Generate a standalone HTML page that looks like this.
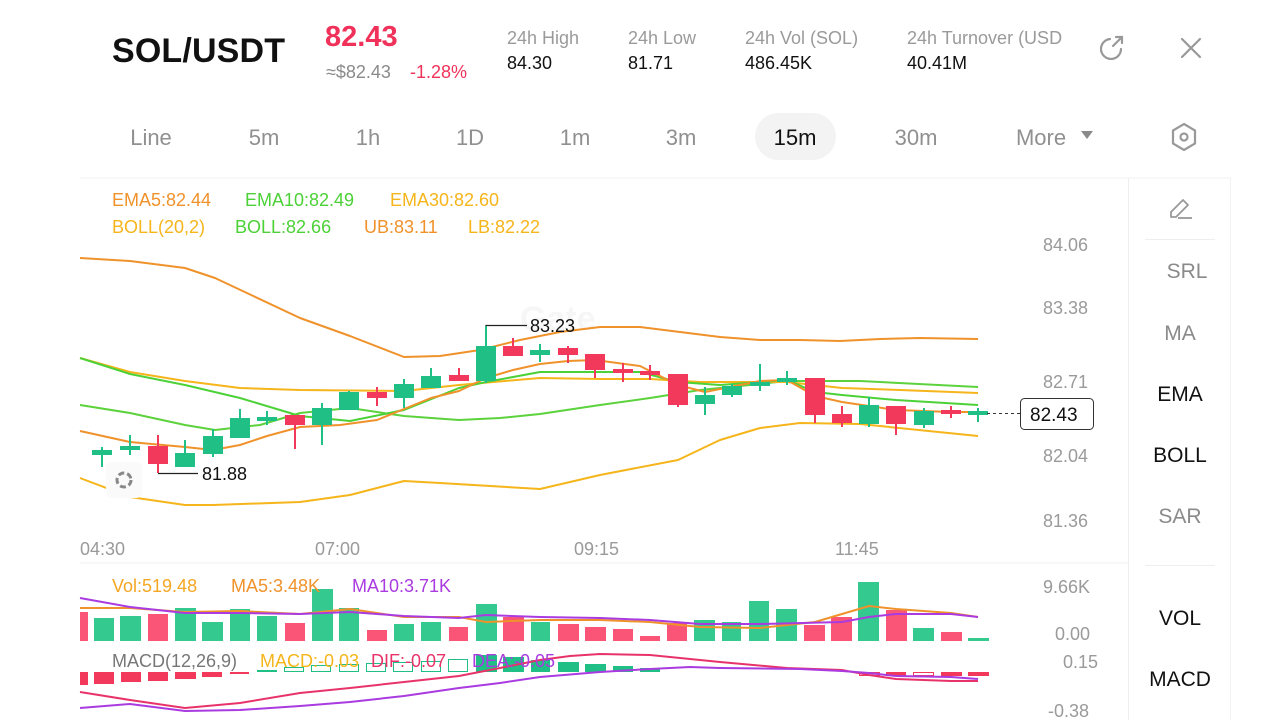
<!DOCTYPE html>
<html><head><meta charset="utf-8"><style>
html,body{margin:0;padding:0;background:#fff;width:1280px;height:720px;overflow:hidden;font-family:"Liberation Sans",Arial,sans-serif}
svg text{font-family:"Liberation Sans",Arial,sans-serif}
</style></head><body>
<svg width="1280" height="720" viewBox="0 0 1280 720" xmlns="http://www.w3.org/2000/svg">
<!-- header -->
<text x="112" y="62" font-size="34" font-weight="bold" fill="#111" textLength="173">SOL/USDT</text>
<text x="325" y="46" font-size="29" font-weight="bold" fill="#F0315A">82.43</text>
<text x="326" y="78" font-size="18" fill="#8a8a8a">≈$82.43</text>
<text x="410" y="78" font-size="18" fill="#F0315A">-1.28%</text>
<g font-size="18" fill="#9a9a9a" xml:space="preserve" style="white-space:pre">
<text x="507" y="44">24h  High</text><text x="628" y="44">24h  Low</text><text x="745" y="44">24h  Vol (SOL)</text><text x="907" y="44">24h  Turnover (USD</text>
</g>
<rect x="1084" y="20" width="20" height="40" fill="#fff"/>
<g font-size="18" fill="#111">
<text x="507" y="69">84.30</text><text x="628" y="69">81.71</text><text x="745" y="69">486.45K</text><text x="907" y="69">40.41M</text>
</g>
<!-- share icon -->
<g fill="none" stroke="#999" stroke-width="2.2" stroke-linecap="round">
<path d="M1121 49 A10 10 0 1 1 1110 39"/>
<path d="M1113 46 L1122 37 M1116 37 L1122 37 L1122 43"/>
<path d="M1182 39 L1200 57 M1200 39 L1182 57"/>
</g>
<!-- tabs -->
<rect x="755" y="113" width="81" height="47" rx="23.5" fill="#f3f3f3"/>
<g font-size="22" fill="#909090" text-anchor="middle">
<text x="151" y="145">Line</text><text x="264" y="145">5m</text><text x="368" y="145">1h</text><text x="470" y="145">1D</text><text x="575" y="145">1m</text><text x="681" y="145">3m</text><text x="795" y="145" fill="#111">15m</text><text x="916" y="145">30m</text><text x="1041" y="145">More</text>
</g>
<path d="M1081 131 L1093 131 L1087 139 Z" fill="#8a8a8a"/>
<g fill="none" stroke="#999" stroke-width="2.2"><path d="M1184 124 L1195 130.5 L1195 143.5 L1184 150 L1173 143.5 L1173 130.5 Z"/><circle cx="1184" cy="137" r="3.5"/></g>
<!-- frame lines -->
<line x1="80" y1="178" x2="1230" y2="178" stroke="#f0f0f0"/>
<line x1="1128.5" y1="178" x2="1128.5" y2="720" stroke="#eee"/>
<line x1="1230.5" y1="178" x2="1230.5" y2="720" stroke="#f2f2f2"/>
<line x1="80" y1="563" x2="1128" y2="563" stroke="#f0f0f0"/>
<line x1="1145" y1="239.5" x2="1215" y2="239.5" stroke="#eee"/>
<line x1="1145" y1="565.5" x2="1215" y2="565.5" stroke="#eee"/>
<!-- pencil -->
<g fill="none" stroke="#999" stroke-width="1.8" stroke-linejoin="round"><path d="M1171 217 L1171 212 L1183 200 L1188 205 L1176 217 Z"/><path d="M1178 218 L1192 218"/></g>
<g font-size="21" text-anchor="middle">
<text x="1187" y="278" fill="#8a8a8a">SRL</text><text x="1180" y="340" fill="#8a8a8a">MA</text><text x="1180" y="401" fill="#111">EMA</text><text x="1180" y="462" fill="#111">BOLL</text><text x="1180" y="523" fill="#8a8a8a">SAR</text><text x="1180" y="625" fill="#111">VOL</text><text x="1180" y="686" fill="#111">MACD</text>
</g>
<!-- legends -->
<g font-size="18">
<text x="112" y="206" fill="#F0922B">EMA5:82.44</text><text x="245" y="206" fill="#4CD137">EMA10:82.49</text><text x="390" y="206" fill="#F5B51B">EMA30:82.60</text>
<text x="112" y="233" fill="#F5B51B">BOLL(20,2)</text><text x="235" y="233" fill="#4CD137">BOLL:82.66</text><text x="364" y="233" fill="#F0922B">UB:83.11</text><text x="468" y="233" fill="#F5B51B">LB:82.22</text>
</g>
<text x="520" y="330" font-size="34" font-weight="bold" fill="#f6f6f6">Gate</text>
<!-- axis -->
<g font-size="18" fill="#9a9a9a">
<text x="1043" y="251">84.06</text><text x="1043" y="314">83.38</text><text x="1043" y="388">82.71</text><text x="1043" y="462">82.04</text><text x="1043" y="527">81.36</text>
<text x="80" y="555">04:30</text><text x="315" y="555">07:00</text><text x="574" y="555">09:15</text><text x="835" y="555">11:45</text>
<text x="1043" y="593">9.66K</text><text x="1055" y="640">0.00</text><text x="1063" y="668">0.15</text><text x="1048" y="717">-0.38</text>
</g>
<!-- BB & EMA lines -->
<g fill="none" stroke-width="2" stroke-linejoin="round">
<polyline stroke="#F0922B" points="80,258 130,261 185,268 215,278 300,318 350,336 404,357 440,356 480,350 520,340 560,332 600,327 640,327 680,332 720,337 760,340 800,340 840,341 880,339 920,338 978,339"/>
<polyline stroke="#F5B51B" points="80,478 130,497 185,505 213,505 300,502 350,495 404,481 440,483 540,489 600,475 678,460 720,440 760,428 800,423 860,424 978,436"/>
<polyline stroke="#5CD23C" points="80,405 130,413 185,425 215,430 260,425 300,413 350,408 404,416 459,420 500,418 540,414 600,405 650,398 700,390 740,386 787,381 860,381 978,387"/>
<polyline stroke="#F5B51B" points="80,358 130,372 185,381 240,388 300,390 404,391 459,385 540,378 600,379 650,379 700,382 787,382 842,388 900,390 978,393"/>
<polyline stroke="#4CD137" points="80,358 130,374 185,385 240,398 300,416 350,421 404,410 459,388 486,382 540,372 600,372 640,372 678,382 720,385 760,382 787,380 815,392 842,395 896,400 978,405"/>
<polyline stroke="#F0922B" points="80,431 130,442 185,447 213,450 240,445 267,436 300,427 340,425 377,420 404,409 431,398 459,391 486,378 513,370 540,364 568,361 595,360 640,366 678,385 705,392 760,381 787,380 815,396 842,402 896,410 951,412 978,412"/>
</g>
<!-- candles -->
<g stroke-width="2">
<g fill="#1FBF85" stroke="#1FBF85">
<line x1="102" y1="447" x2="102" y2="467"/><rect x="93" y="451" width="18" height="3"/>
<line x1="130" y1="435" x2="130" y2="455"/><rect x="121" y="447" width="18" height="2"/>
<line x1="185" y1="440" x2="185" y2="467"/><rect x="176" y="454" width="18" height="12"/>
<line x1="213" y1="429" x2="213" y2="457"/><rect x="204" y="437" width="18" height="16"/>
<line x1="240" y1="409" x2="240" y2="438"/><rect x="231" y="419" width="18" height="18"/>
<line x1="267" y1="411" x2="267" y2="425"/><rect x="258" y="418" width="18" height="2"/>
<line x1="322" y1="403" x2="322" y2="445"/><rect x="313" y="409" width="18" height="15"/>
<line x1="349" y1="391" x2="349" y2="410"/><rect x="340" y="393" width="18" height="16"/>
<line x1="404" y1="379" x2="404" y2="408"/><rect x="395" y="385" width="18" height="12"/>
<line x1="431" y1="368" x2="431" y2="388"/><rect x="422" y="377" width="18" height="10"/>
<line x1="486" y1="326" x2="486" y2="383"/><rect x="477" y="347" width="18" height="33"/>
<line x1="540" y1="344" x2="540" y2="362"/><rect x="531" y="351" width="18" height="3"/>
<line x1="705" y1="387" x2="705" y2="415"/><rect x="696" y="396" width="18" height="7"/>
<line x1="732" y1="384" x2="732" y2="397"/><rect x="723" y="387" width="18" height="7"/>
<line x1="760" y1="364" x2="760" y2="391"/><rect x="751" y="383" width="18" height="2"/>
<line x1="787" y1="371" x2="787" y2="385"/><rect x="778" y="379" width="18" height="2"/>
<line x1="869" y1="397" x2="869" y2="427"/><rect x="860" y="406" width="18" height="17"/>
<line x1="924" y1="408" x2="924" y2="428"/><rect x="915" y="412" width="18" height="12"/>
<line x1="978" y1="408" x2="978" y2="422"/><rect x="969" y="412" width="18" height="2"/>
</g>
<g fill="#F2395B" stroke="#F2395B">
<line x1="158" y1="435" x2="158" y2="473"/><rect x="149" y="447" width="18" height="16"/>
<line x1="295" y1="416" x2="295" y2="449"/><rect x="286" y="416" width="18" height="8"/>
<line x1="377" y1="387" x2="377" y2="406"/><rect x="368" y="393" width="18" height="4"/>
<line x1="459" y1="368" x2="459" y2="380"/><rect x="450" y="376" width="18" height="4"/>
<line x1="513" y1="338" x2="513" y2="356"/><rect x="504" y="347" width="18" height="8"/>
<line x1="568" y1="346" x2="568" y2="363"/><rect x="559" y="349" width="18" height="5"/>
<line x1="595" y1="355" x2="595" y2="378"/><rect x="586" y="355" width="18" height="14"/>
<line x1="623" y1="363" x2="623" y2="382"/><rect x="614" y="370" width="18" height="2"/>
<line x1="650" y1="365" x2="650" y2="380"/><rect x="641" y="372" width="18" height="2"/>
<line x1="678" y1="375" x2="678" y2="407"/><rect x="669" y="375" width="18" height="29"/>
<line x1="815" y1="378" x2="815" y2="423"/><rect x="806" y="379" width="18" height="35"/>
<line x1="842" y1="406" x2="842" y2="427"/><rect x="833" y="415" width="18" height="7"/>
<line x1="896" y1="407" x2="896" y2="435"/><rect x="887" y="407" width="18" height="16"/>
<line x1="951" y1="406" x2="951" y2="418"/><rect x="942" y="411" width="18" height="2"/>
</g>
</g>
<!-- high/low marks -->
<g stroke="#222" stroke-width="1.2" fill="none"><path d="M486 326 L486 325.5 L527 325.5"/><path d="M158 473.5 L198 473.5"/></g>
<text x="530" y="332" font-size="18" fill="#111">83.23</text>
<text x="202" y="480" font-size="18" fill="#111">81.88</text>
<rect x="106" y="462" width="36" height="36" rx="6" fill="#fafafa"/>
<circle cx="124" cy="480" r="7" fill="none" stroke="#888" stroke-width="3" stroke-dasharray="6 3"/>
<!-- last price -->
<line x1="987" y1="413.5" x2="1020" y2="413.5" stroke="#333" stroke-dasharray="3 3"/>
<rect x="1020.5" y="398.5" width="73" height="31" rx="4" fill="#fff" stroke="#333"/>
<text x="1030" y="421" font-size="19" fill="#111">82.43</text>
<!-- volume -->
<g fill="#34C98F">
<rect x="94" y="618" width="20" height="23"/><rect x="120" y="616" width="21" height="25"/><rect x="175" y="608" width="21" height="33"/><rect x="202" y="622" width="21" height="19"/><rect x="230" y="609" width="20" height="32"/><rect x="257" y="616" width="20" height="25"/><rect x="312" y="589" width="21" height="52"/><rect x="339" y="608" width="20" height="33"/><rect x="394" y="624" width="20" height="17"/><rect x="421" y="622" width="20" height="19"/><rect x="476" y="604" width="21" height="37"/><rect x="531" y="622" width="19" height="19"/><rect x="694" y="620" width="21" height="21"/><rect x="722" y="622" width="19" height="19"/><rect x="749" y="601" width="20" height="40"/><rect x="776" y="609" width="21" height="32"/><rect x="858" y="582" width="21" height="59"/><rect x="913" y="628" width="21" height="13"/><rect x="968" y="638" width="21" height="3"/>
</g>
<g fill="#FA5477">
<rect x="80" y="612" width="8" height="29"/><rect x="148" y="614" width="20" height="27"/><rect x="285" y="623" width="20" height="18"/><rect x="367" y="630" width="20" height="11"/><rect x="449" y="627" width="19" height="14"/><rect x="503" y="617" width="21" height="24"/><rect x="558" y="624" width="21" height="17"/><rect x="585" y="627" width="21" height="14"/><rect x="613" y="629" width="20" height="12"/><rect x="640" y="636" width="20" height="5"/><rect x="667" y="623" width="20" height="18"/><rect x="804" y="625" width="21" height="16"/><rect x="831" y="617" width="21" height="24"/><rect x="886" y="610" width="21" height="31"/><rect x="941" y="632" width="21" height="9"/>
</g>
<g fill="none" stroke-width="2">
<polyline stroke="#F0922B" points="80,608 130,608 185,612 240,611 300,614 350,609 404,617 459,617 486,622 540,620 600,620 650,622 700,627 760,628 815,622 842,614 869,606 896,609 951,613 978,617"/>
<polyline stroke="#A93BE0" points="80,598 130,607 185,613 240,613 300,614 350,612 404,616 459,618 486,615 540,617 600,618 650,620 700,624 760,624 842,622 869,617 896,614 951,614 978,617"/>
</g>
<g font-size="18"><text x="112" y="592" fill="#F5A623">Vol:519.48</text><text x="231" y="592" fill="#F0922B">MA5:3.48K</text><text x="352" y="592" fill="#A93BE0">MA10:3.71K</text></g>
<!-- MACD -->
<g fill="#F2395B"><rect x="80" y="672" width="8" height="13"/><rect x="94" y="672" width="20" height="12"/><rect x="121" y="672" width="20" height="10"/><rect x="148" y="672" width="20" height="9"/><rect x="175" y="672" width="21" height="7"/><rect x="202" y="672" width="20" height="5"/><rect x="230" y="672" width="19" height="2"/>
<rect x="886" y="672" width="20" height="4"/><rect x="941" y="672" width="21" height="4"/><rect x="968" y="672" width="21" height="4"/></g>
<g fill="none" stroke="#F2395B" stroke-width="1"><rect x="859.5" y="672.5" width="20" height="3"/><rect x="913.5" y="672.5" width="20" height="3"/></g>
<g fill="#1FBF85"><rect x="257" y="670" width="20" height="2"/><rect x="476" y="655" width="21" height="17"/><rect x="503" y="657" width="21" height="15"/><rect x="531" y="660" width="19" height="12"/><rect x="558" y="662" width="21" height="10"/><rect x="585" y="664" width="21" height="8"/><rect x="613" y="666" width="20" height="6"/><rect x="640" y="668" width="20" height="4"/></g>
<g fill="none" stroke="#1FBF85" stroke-width="1"><rect x="284.5" y="667.5" width="19" height="4"/><rect x="311.5" y="665.5" width="19" height="6"/><rect x="339.5" y="664.5" width="19" height="7"/><rect x="366.5" y="663.5" width="19" height="8"/><rect x="393.5" y="662.5" width="19" height="9"/><rect x="421.5" y="661.5" width="19" height="10"/><rect x="448.5" y="659.5" width="19" height="12"/></g>
<g fill="none" stroke-width="2">
<polyline stroke="#E8336A" points="80,692 130,700 185,708 240,703 300,693 350,688 404,682 459,676 500,668 540,660 570,656 600,654 650,655 690,659 720,662 787,668 842,670 869,675 896,679 951,681 978,681"/>
<polyline stroke="#A93BE0" points="80,708 130,704 185,711 240,710 300,706 350,702 404,696 459,688 500,683 540,677 600,672 650,669 690,667 720,668 800,669 842,671 869,673 896,676 951,677 978,679"/>
</g>
<g font-size="18"><text x="112" y="667" fill="#777">MACD(12,26,9)</text><text x="260" y="667" fill="#F5B51B">MACD:-0.03</text><text x="371" y="667" fill="#E8336A">DIF:-0.07</text><text x="472" y="667" fill="#A93BE0">DEA:-0.05</text></g>
</svg>
</body></html>
